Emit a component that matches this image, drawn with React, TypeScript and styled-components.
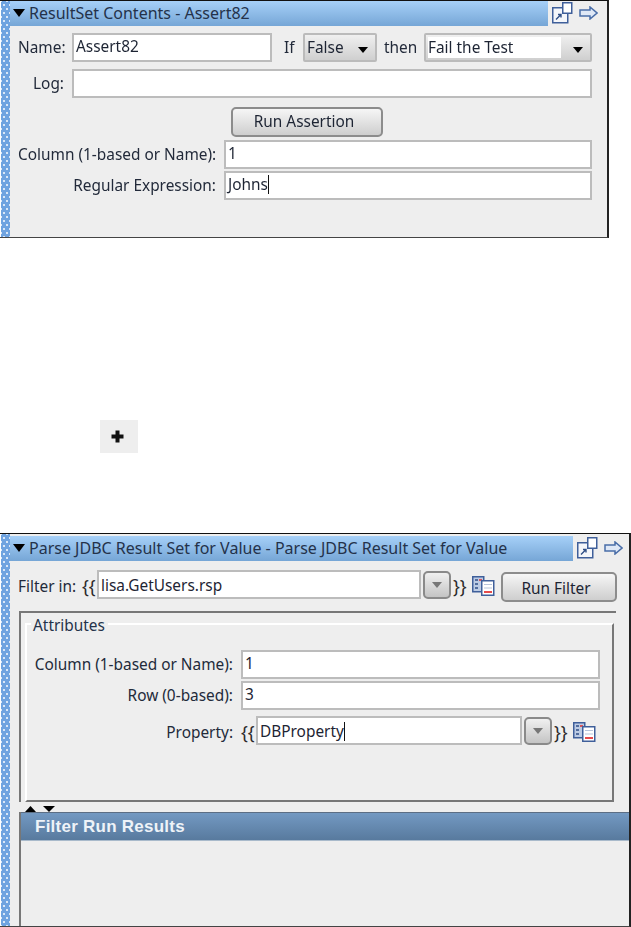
import styled, { createGlobalStyle } from "styled-components";

const Global = createGlobalStyle`
  * { box-sizing: border-box; }
  html, body { margin: 0; padding: 0; background: #fff; }
  body { font-family: "Noto Sans", "Open Sans", sans-serif; font-size: 15.4px; color: #222a3a; }
`;

const Page = styled.div`
  width: 631px;
  height: 927px;
  overflow: hidden;
  display: flex;
  flex-direction: column;
  filter: blur(0.35px);
`;

const Panel = styled.div<{ $w: number; $h: number }>`
  width: ${(p) => p.$w}px;
  height: ${(p) => p.$h}px;
  flex: none;
  display: flex;
  background: #eeeeee;
  border-top: 1px solid #111;
  border-right: 2px solid #222;
  border-bottom: 1px solid #444;
`;

const Grip = styled.div`
  width: 10px;
  flex: none;
  background-color: #6fa3e0;
  background-image: radial-gradient(circle, #dbe8f8 0.7px, transparent 1px),
    radial-gradient(circle, #dbe8f8 0.7px, transparent 1px);
  background-size: 6px 8px;
  background-position: 0 0, 3px 4px;
  border-left: 1px solid #fff;
`;

const Body = styled.div`
  flex: 1;
  min-width: 0;
  display: flex;
  flex-direction: column;
`;

const TitleRow = styled.div<{ $top?: number }>`
  display: flex;
  height: ${(p) => 25 + (p.$top || 0)}px;
  padding-top: ${(p) => p.$top || 0}px;
  flex: none;
`;

const TitleBar = styled.div`
  flex: 1;
  display: flex;
  align-items: center;
  gap: 3px;
  padding: 0 0 1px 3px;
  font-size: 16px;
  color: #24324a;
  white-space: nowrap;
  background: linear-gradient(#a6d0f8, #76a6d6);
`;

const Collapse = styled.span`
  width: 0;
  height: 0;
  border-left: 6px solid transparent;
  border-right: 6px solid transparent;
  border-top: 8px solid #000;
  margin-right: 1px;
`;

const TitleIcons = styled.div<{ $w: number }>`
  width: ${(p) => p.$w}px;
  flex: none;
  display: flex;
  align-items: flex-start;
  padding: 1px 0 0 4px;
  gap: 6px;
`;

const Form = styled.div`
  padding: 7px 15px 0 8px;
  display: flex;
  flex-direction: column;
`;

const Row = styled.div<{ $mt?: number }>`
  display: flex;
  align-items: center;
  margin-top: ${(p) => p.$mt || 0}px;
`;

const Label = styled.label<{ $w: number }>`
  width: ${(p) => p.$w}px;
  flex: none;
  margin-right: 8px;
  text-align: right;
  white-space: nowrap;
`;

const Word = styled.span<{ $ml: number; $w: number }>`
  margin-left: ${(p) => p.$ml}px;
  width: ${(p) => p.$w}px;
  flex: none;
  white-space: nowrap;
`;

const Field = styled.div<{ $w?: number }>`
  ${(p) => (p.$w ? `width: ${p.$w}px; flex: none;` : "flex: 1;")}
  height: 29px;
  background: #fff;
  border: 2px solid #bcbcbc;
  padding: 0 0 2px 2px;
  display: flex;
  align-items: center;
  color: #1d2433;
  white-space: nowrap;
`;

const Caret = styled.span`
  width: 1px;
  height: 19px;
  background: #111;
`;

const Combo = styled.div<{ $w: number }>`
  width: ${(p) => p.$w}px;
  flex: none;
  height: 29px;
  display: flex;
  align-items: stretch;
  border: 2px solid #bbbbbb;
  border-radius: 2px;
  background: linear-gradient(#f0f0f0, #cfcfcf);
  padding: 2px 0 2px 2px;
`;

const ComboText = styled.div<{ $white?: boolean }>`
  flex: 1;
  display: flex;
  align-items: center;
  color: #1d2433;
  background: ${(p) => (p.$white ? "#fff" : "transparent")};
`;

const ComboArrow = styled.div`
  width: 29px;
  flex: none;
  display: flex;
  align-items: center;
  justify-content: center;
  padding: 4px 0 0 5px;
`;

const Tri = styled.span<{ $color?: string }>`
  width: 0;
  height: 0;
  border-left: 5.5px solid transparent;
  border-right: 5.5px solid transparent;
  border-top: 6px solid ${(p) => p.$color || "#000"};
`;

const Button = styled.div<{ $w: number; $h: number; $ml?: number; $mt?: number }>`
  width: ${(p) => p.$w}px;
  height: ${(p) => p.$h}px;
  margin-left: ${(p) => p.$ml || 0}px;
  margin-top: ${(p) => p.$mt || 0}px;
  flex: none;
  display: flex;
  align-items: center;
  justify-content: center;
  padding: 0 6px 2px 0;
  border: 2px solid #8c8c8c;
  border-radius: 5px;
  background: linear-gradient(#f6f6f6, #cecece);
  color: #1d2433;
`;

const DropButton = styled(Button)`
  padding: 0;
  border-color: #8a8a8a;
  background: linear-gradient(#f0f0f0, #c4c4c4);
`;

const TokenRow = styled.div<{ $mt?: number; $ml?: number }>`
  display: flex;
  align-items: flex-start;
  line-height: 33px;
  margin: ${(p) => p.$mt || 0}px 0 0 ${(p) => p.$ml || 0}px;

  ${Field} {
    padding: 2px 0 0 2px;
  }
`;

const FilterButton = styled(Button)`
  padding: 2px 6px 0 0;
`;

const Brace = styled.span<{ $w: number; $ml?: number }>`
  width: ${(p) => p.$w}px;
  margin-left: ${(p) => p.$ml || 0}px;
  flex: none;
  color: #2c2a2a;
  font-size: 18px;
  white-space: nowrap;
`;

const Group = styled.div`
  position: relative;
  width: 597px;
  height: 191px;
  margin: 8px 0 0 9px;
  padding: 10px 2px 0 4px;
  flex: none;
  border-top: 2px solid #777;
  border-left: 2px solid #777;
`;

const Legend = styled.span`
  position: absolute;
  left: 10px;
  top: 2px;
  padding: 0 3px 0 2px;
  background: #eeeeee;
  color: #24324a;
`;

const Frame = styled.div`
  height: 179px;
  padding: 25px 12px 0 0;
  border-top: 2px solid #fff;
  border-left: 2px solid #fff;
  border-right: 2px solid #777;
  border-bottom: 2px solid #777;
`;

const Splitter = styled.div`
  height: 10px;
  flex: none;
  margin-left: 15px;
  padding-top: 4px;
  display: flex;
  gap: 7px;
`;

const Results = styled.div`
  flex: 1;
  margin-left: 9px;
  border-left: 2px solid #777;
`;

const ResultsHead = styled.div`
  height: 29px;
  padding-left: 14px;
  display: flex;
  align-items: center;
  background: linear-gradient(#7399c2, #587a9e);
  border-top: 1px solid #5c6e84;
  border-bottom: 1px solid #a9bacb;
  color: #eef3f8;
  font-family: "Liberation Sans", Arial, sans-serif;
  font-weight: bold;
  font-size: 17px;
  letter-spacing: 0.25px;
`;

const PlusBox = styled.div`
  width: 38px;
  height: 33px;
  margin: 182px 0 80px 100px;
  padding-right: 4px;
  flex: none;
  display: flex;
  align-items: center;
  justify-content: center;
  background: #eeeeee;
`;

const ArrowSvg = styled.svg`
  margin-top: 4px;
`;

const PropsSvg = styled.svg`
  flex: none;
  margin-top: 5px;
`;

function ExpandIcon() {
  return (
    <svg width="21" height="22" viewBox="0 0 21 22">
      <rect x="0.75" y="5.75" width="15" height="15" fill="#f4f6fa" stroke="#3f5f9a" strokeWidth="1.5" />
      <rect x="10.75" y="0.75" width="9" height="10.5" fill="#fff" stroke="#3f5f9a" strokeWidth="1.5" />
      <path d="M4 17.5 L9 12.5 M6 12.5 H9 V15.5" fill="none" stroke="#2f4f86" strokeWidth="1.4" />
    </svg>
  );
}

function ArrowIcon() {
  return (
    <ArrowSvg width="19" height="14" viewBox="0 0 19 14">
      <path d="M1 4 H11 V1 L18 7 L11 13 V10 H1 Z" fill="#dfe8f6" stroke="#4a6ea8" strokeWidth="1.5" />
    </ArrowSvg>
  );
}

function PropsIcon() {
  return (
    <PropsSvg width="23" height="21" viewBox="0 0 23 21">
      <rect x="0.75" y="1.75" width="11" height="15" fill="#bccbe4" stroke="#3f5f9a" strokeWidth="1.5" />
      <path d="M3 5 H6 M3 9 H6 M3 13 H6" stroke="#2f4f86" strokeWidth="1.4" />
      <path d="M7 5 H10" stroke="#e02020" strokeWidth="1.4" />
      <rect x="9.75" y="5.75" width="12" height="14.5" fill="#fff" stroke="#3f5f9a" strokeWidth="1.5" />
      <path d="M12 9.5 H20 M12 13 H20" stroke="#b8c4da" strokeWidth="1.2" />
      <path d="M12 17 H20" stroke="#e02020" strokeWidth="1.6" />
    </PropsSvg>
  );
}

export default function App() {
  return (
    <Page>
      <Global />
      <Panel $w={609} $h={238}>
        <Grip />
        <Body>
          <TitleRow>
            <TitleBar>
              <Collapse />
              ResultSet Contents - Assert82
            </TitleBar>
            <TitleIcons $w={59}>
              <ExpandIcon />
              <ArrowIcon />
            </TitleIcons>
          </TitleRow>
          <Form>
            <Row>
              <Label $w={46}>Name:</Label>
              <Field $w={200}>Assert82</Field>
              <Word $ml={12} $w={19}>If</Word>
              <Combo $w={74}>
                <ComboText>False</ComboText>
                <ComboArrow><Tri /></ComboArrow>
              </Combo>
              <Word $ml={7} $w={40}>then</Word>
              <Combo $w={168}>
                <ComboText $white>Fail the Test</ComboText>
                <ComboArrow><Tri /></ComboArrow>
              </Combo>
            </Row>
            <Row $mt={7}>
              <Label $w={46}>Log:</Label>
              <Field />
            </Row>
            <Button $w={152} $h={30} $ml={213} $mt={9}>Run Assertion</Button>
            <Row $mt={3}>
              <Label $w={198}>Column (1-based or Name):</Label>
              <Field>1</Field>
            </Row>
            <Row $mt={2}>
              <Label $w={198}>Regular Expression:</Label>
              <Field>Johns<Caret /></Field>
            </Row>
          </Form>
        </Body>
      </Panel>

      <PlusBox>
        <svg width="13" height="13" viewBox="0 0 13 13">
          <path d="M4.5 0.5 H8.5 V4.5 H12.5 V8.5 H8.5 V12.5 H4.5 V8.5 H0.5 V4.5 H4.5 Z" fill="#111" />
        </svg>
      </PlusBox>

      <Panel $w={631} $h={394}>
        <Grip />
        <Body>
          <TitleRow $top={2}>
            <TitleBar>
              <Collapse />
              Parse JDBC Result Set for Value - Parse JDBC Result Set for Value
            </TitleBar>
            <TitleIcons $w={56}>
              <ExpandIcon />
              <ArrowIcon />
            </TitleIcons>
          </TitleRow>
          <TokenRow $mt={9} $ml={8}>
            <Word $ml={0} $w={64}>Filter in:</Word>
            <Brace $w={15}>{"{{"}</Brace>
            <Field $w={324}>lisa.GetUsers.rsp</Field>
            <DropButton $w={28} $h={28} $ml={2} $mt={1}><Tri $color="#777" /></DropButton>
            <Brace $w={19} $ml={2}>{"}}"}</Brace>
            <PropsIcon />
            <FilterButton $w={116} $h={30} $ml={6} $mt={2}>Run Filter</FilterButton>
          </TokenRow>
          <Group>
            <Legend>Attributes</Legend>
            <Frame>
              <Row>
                <Label $w={206}>Column (1-based or Name):</Label>
                <Field>1</Field>
              </Row>
              <Row $mt={2}>
                <Label $w={206}>Row (0-based):</Label>
                <Field>3</Field>
              </Row>
              <TokenRow $mt={6}>
                <Label $w={206}>Property:</Label>
                <Brace $w={15}>{"{{"}</Brace>
                <Field $w={266}>DBProperty<Caret /></Field>
                <DropButton $w={28} $h={28} $ml={2} $mt={1}><Tri $color="#777" /></DropButton>
                <Brace $w={19} $ml={2}>{"}}"}</Brace>
                <PropsIcon />
              </TokenRow>
            </Frame>
          </Group>
          <Splitter>
            <svg width="11" height="6" viewBox="0 0 11 6"><path d="M0 6 L5.5 0 L11 6 Z" fill="#000" /></svg>
            <svg width="12" height="6" viewBox="0 0 12 6"><path d="M0 0 L6 6 L12 0 Z" fill="#000" /></svg>
          </Splitter>
          <Results>
            <ResultsHead>Filter Run Results</ResultsHead>
          </Results>
        </Body>
      </Panel>
    </Page>
  );
}
